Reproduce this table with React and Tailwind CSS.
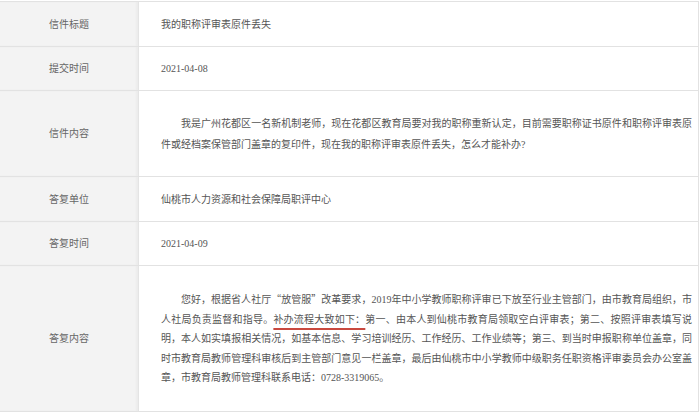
import React from 'react';

const rows = [
  { label: '信件标题', h: 'h-[45px]', value: '我的职称评审表原件丢失' },
  { label: '提交时间', h: 'h-[44px]', value: '2021-04-08' },
  {
    label: '信件内容',
    h: 'h-[86px]',
    value: (
      <p className="indent-[2em] text-justify leading-[21px]">
        我是广州花都区一名新机制老师，现在花都区教育局要对我的职称重新认定，目前需要职称证书原件和职称评审表原件或经档案保管部门盖章的复印件，现在我的职称评审表原件丢失，怎么才能补办?
      </p>
    ),
  },
  { label: '答复单位', h: 'h-[45px]', value: '仙桃市人力资源和社会保障局职评中心' },
  { label: '答复时间', h: 'h-[44px]', value: '2021-04-09' },
  {
    label: '答复内容',
    h: 'h-[145px]',
    value: (
      <p className="indent-[2em] text-justify leading-[19.5px]">
        您好，根据省人社厅<span className="font-['Noto_Sans_CJK_SC']">“</span>放管服<span className="font-['Noto_Sans_CJK_SC']">”</span>改革要求，2019年中小学教师职称评审已下放至行业主管部门，由市教育局组织，市人社局负责监督和指导。
        <span className="underline decoration-[#c9493f] decoration-2 underline-offset-[5px]">补办流程大致如下：</span>
        第一、由本人到仙桃市教育局领取空白评审表；第二、按照评审表填写说明，本人如实填报相关情况，如基本信息、学习培训经历、工作经历、工作业绩等；第三、到当时申报职称单位盖章，同时市教育局教师管理科审核后到主管部门意见一栏盖章，最后由仙桃市中小学教师中级职务任职资格评审委员会办公室盖章，市教育局教师管理科联系电话：0728-3319065。
      </p>
    ),
  },
];

const App = () => {
  return (
    <div className="w-[700px] h-[413px] bg-white pt-px font-['Liberation_Serif','Noto_Sans_CJK_SC',serif] text-[10px]">
      <div className="w-[699px] border-t border-r border-b border-[#e2e2e2]">
        {rows.map((row, i) => (
          <div
            key={row.label}
            className={`flex ${row.h} ${i < rows.length - 1 ? 'border-b border-[#e2e2e2]' : ''}`}
          >
            {/* label cell */}
            <div className="w-[139px] shrink-0 flex items-center justify-center bg-[#f3f3f3] border-r border-[#e4e4e4] shadow-[inset_-2px_0_2px_rgba(0,0,0,0.03)] text-[#666]">
              {row.label}
            </div>
            {/* value cell */}
            <div className="flex-1 flex items-center pl-[22px] pr-[6px] text-[#555]">
              <div className="w-full">{row.value}</div>
            </div>
          </div>
        ))}
      </div>
    </div>
  );
};

export default App;
